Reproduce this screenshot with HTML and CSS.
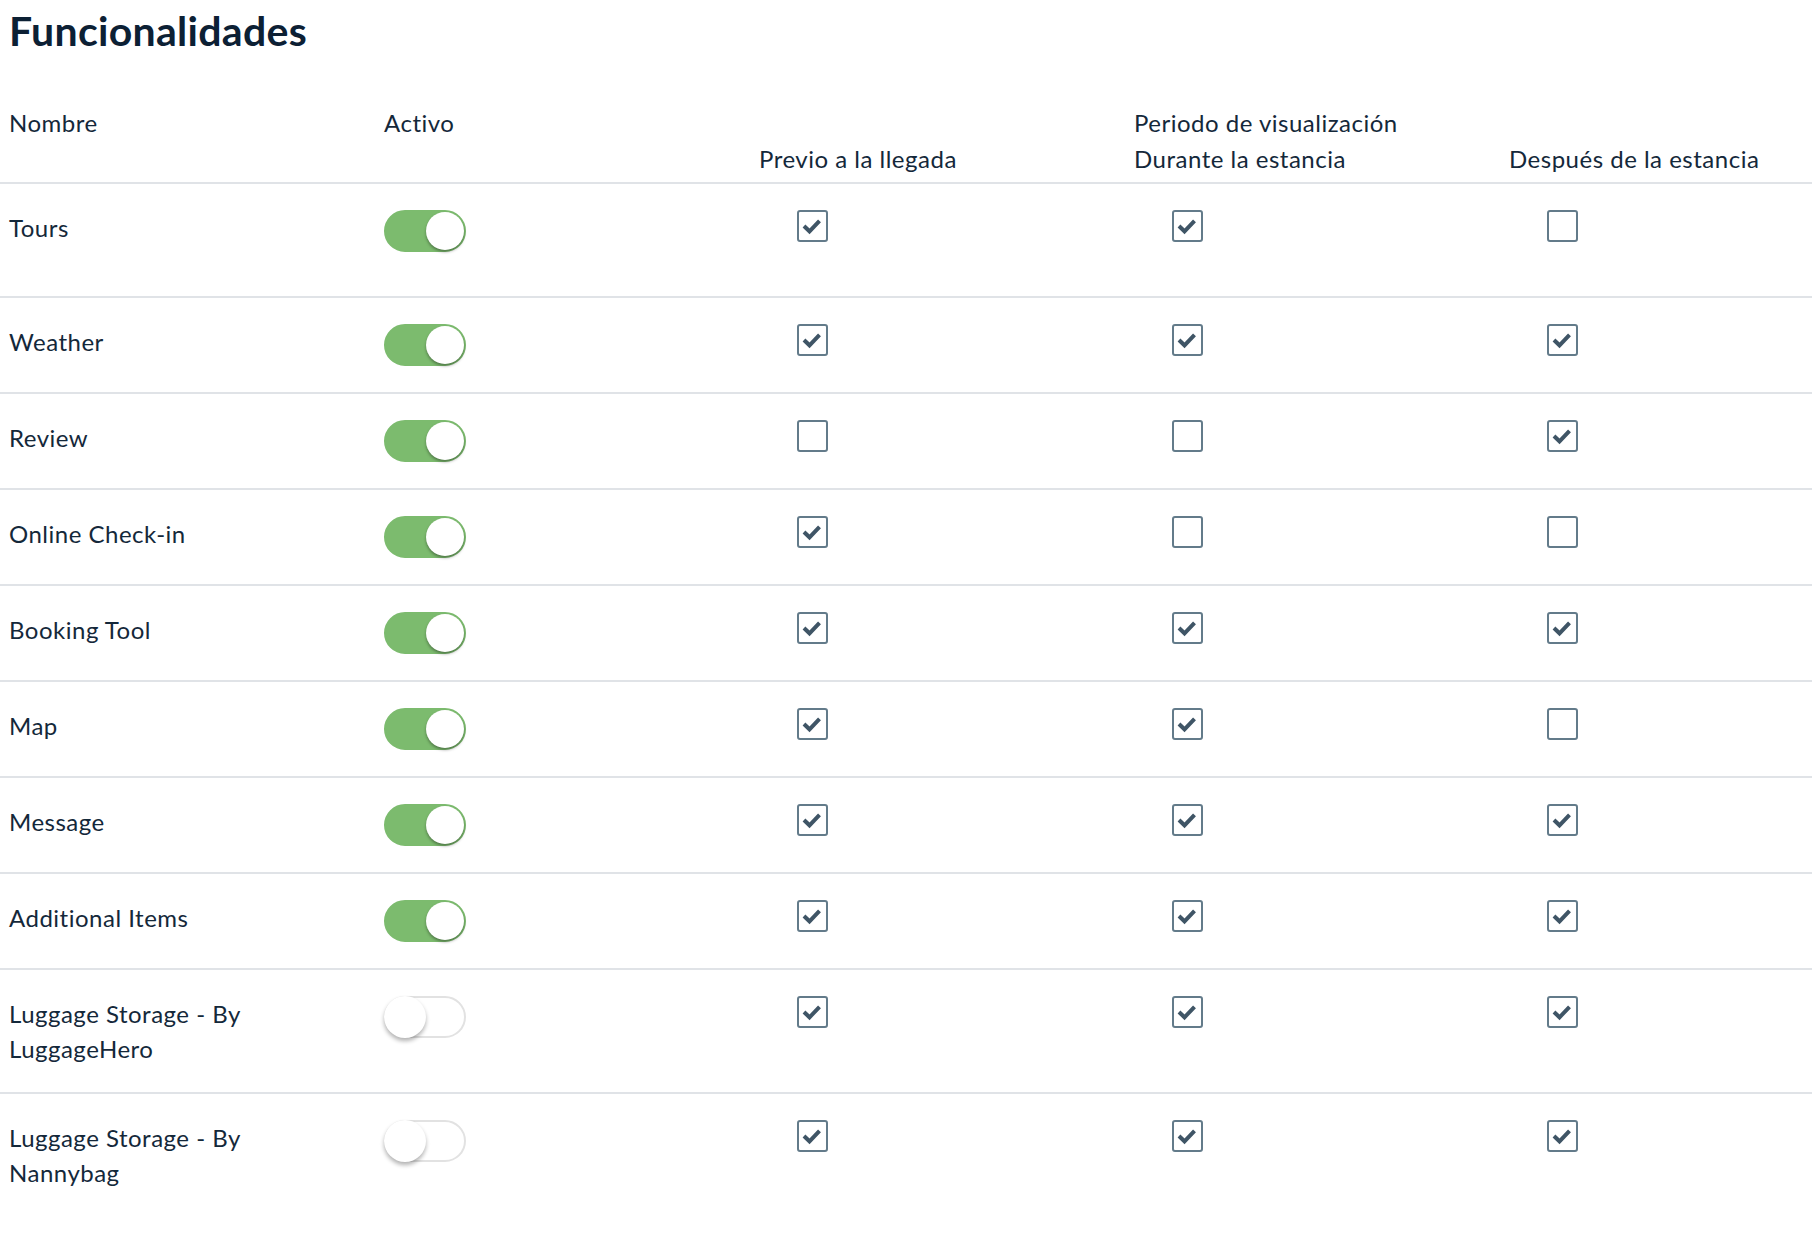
FILE: index.html
```html
<!DOCTYPE html>
<html lang="es">
<head>
    <meta charset="UTF-8">
    <title>Funcionalidades</title>
    <link rel="stylesheet" href="styles.css">
</head>
<body>
    <h1 class="title">Funcionalidades</h1>

    <div class="tableWrap">
        <div class="table">
            <div class="row head">
                <div class="cell">Nombre</div>
                <div class="cell">Activo</div>
                <div class="cell bottom">Previo a la llegada</div>
                <div class="cell">Periodo de visualización<br>Durante la estancia</div>
                <div class="cell bottom">Después de la estancia</div>
            </div>
        </div>
    </div>

    <script>
        const features = [
            ['Tours', true, [1, 1, 0], true],
            ['Weather', true, [1, 1, 1]],
            ['Review', true, [0, 0, 1]],
            ['Online Check-in', true, [1, 0, 0]],
            ['Booking Tool', true, [1, 1, 1]],
            ['Map', true, [1, 1, 0]],
            ['Message', true, [1, 1, 1]],
            ['Additional Items', true, [1, 1, 1]],
            ['Luggage Storage - By LuggageHero', false, [1, 1, 1]],
            ['Luggage Storage - By Nannybag', false, [1, 1, 1]]
        ];

        const tick = '<svg width="27" height="28" viewBox="0 0 27 28"><path d="M5 14 L10.5 19.3 L20.5 8.8" fill="none" stroke="#3f5566" stroke-width="4"/></svg>';

        const table = document.querySelector('.table');

        features.forEach(function (f) {
            const row = document.createElement('div');
            row.className = 'row' + (f[3] ? ' tall' : '');

            let html = '<div class="cell name">' + f[0] + '</div>';
            html += '<div class="cell"><span class="switch' + (f[1] ? ' on' : '') + '"></span></div>';
            f[2].forEach(function (v) {
                html += '<div class="cell"><span class="check">' + (v ? tick : '') + '</span></div>';
            });

            row.innerHTML = html;
            table.appendChild(row);
        });
    </script>
</body>
</html>
```

FILE: styles.css
```css
body {
    margin: 0;
    background: #ffffff;
    color: #14283a;
    font-family: 'Lato', 'Liberation Sans', sans-serif;
    font-size: 24px;
    letter-spacing: 0.5px;
    overflow: hidden;
}

.title {
    margin: 0;
    padding: 7px 9px 0;
    font-size: 41px;
    line-height: 48px;
    font-weight: 700;
    letter-spacing: 0.3px;
    color: #0c2034;
}

.tableWrap {
    margin-top: 50px;
    overflow: hidden;
}

.table {
    width: 1875px;
}

.row {
    display: grid;
    grid-template-columns: repeat(5, 375px);
    border-bottom: 2px solid #e0e3e7;
}

.row:last-child {
    border-bottom: none;
}

.cell {
    padding: 26px 9px;
    line-height: 35px;
}

.row.tall .cell {
    padding-bottom: 44px;
}

.head .cell {
    padding: 0 9px 5px;
    line-height: 36px;
}

.head .bottom {
    align-self: end;
}

.name {
    padding-right: 60px;
}

.switch {
    position: relative;
    display: block;
    width: 82px;
    height: 42px;
    box-sizing: border-box;
    border-radius: 21px;
    border: 2px solid #e2e2e2;
    background: #ffffff;
}

.switch::after {
    content: '';
    position: absolute;
    left: -2px;
    top: -2px;
    width: 42px;
    height: 42px;
    border-radius: 50%;
    background: #ffffff;
    box-shadow: 0 3px 4px rgba(0, 0, 0, 0.3);
}

.switch.on {
    background: #7cbb6e;
    border-color: #7cbb6e;
}

.switch.on::after {
    left: auto;
    right: 0;
    top: 0;
    width: 38px;
    height: 38px;
    box-shadow: 0 2px 3px rgba(0, 0, 0, 0.35);
}

.check {
    display: block;
    width: 31px;
    height: 32px;
    margin-left: 38px;
    box-sizing: border-box;
    border: 2px solid #637b8a;
    border-radius: 3px;
}

.check svg {
    display: block;
}
```
